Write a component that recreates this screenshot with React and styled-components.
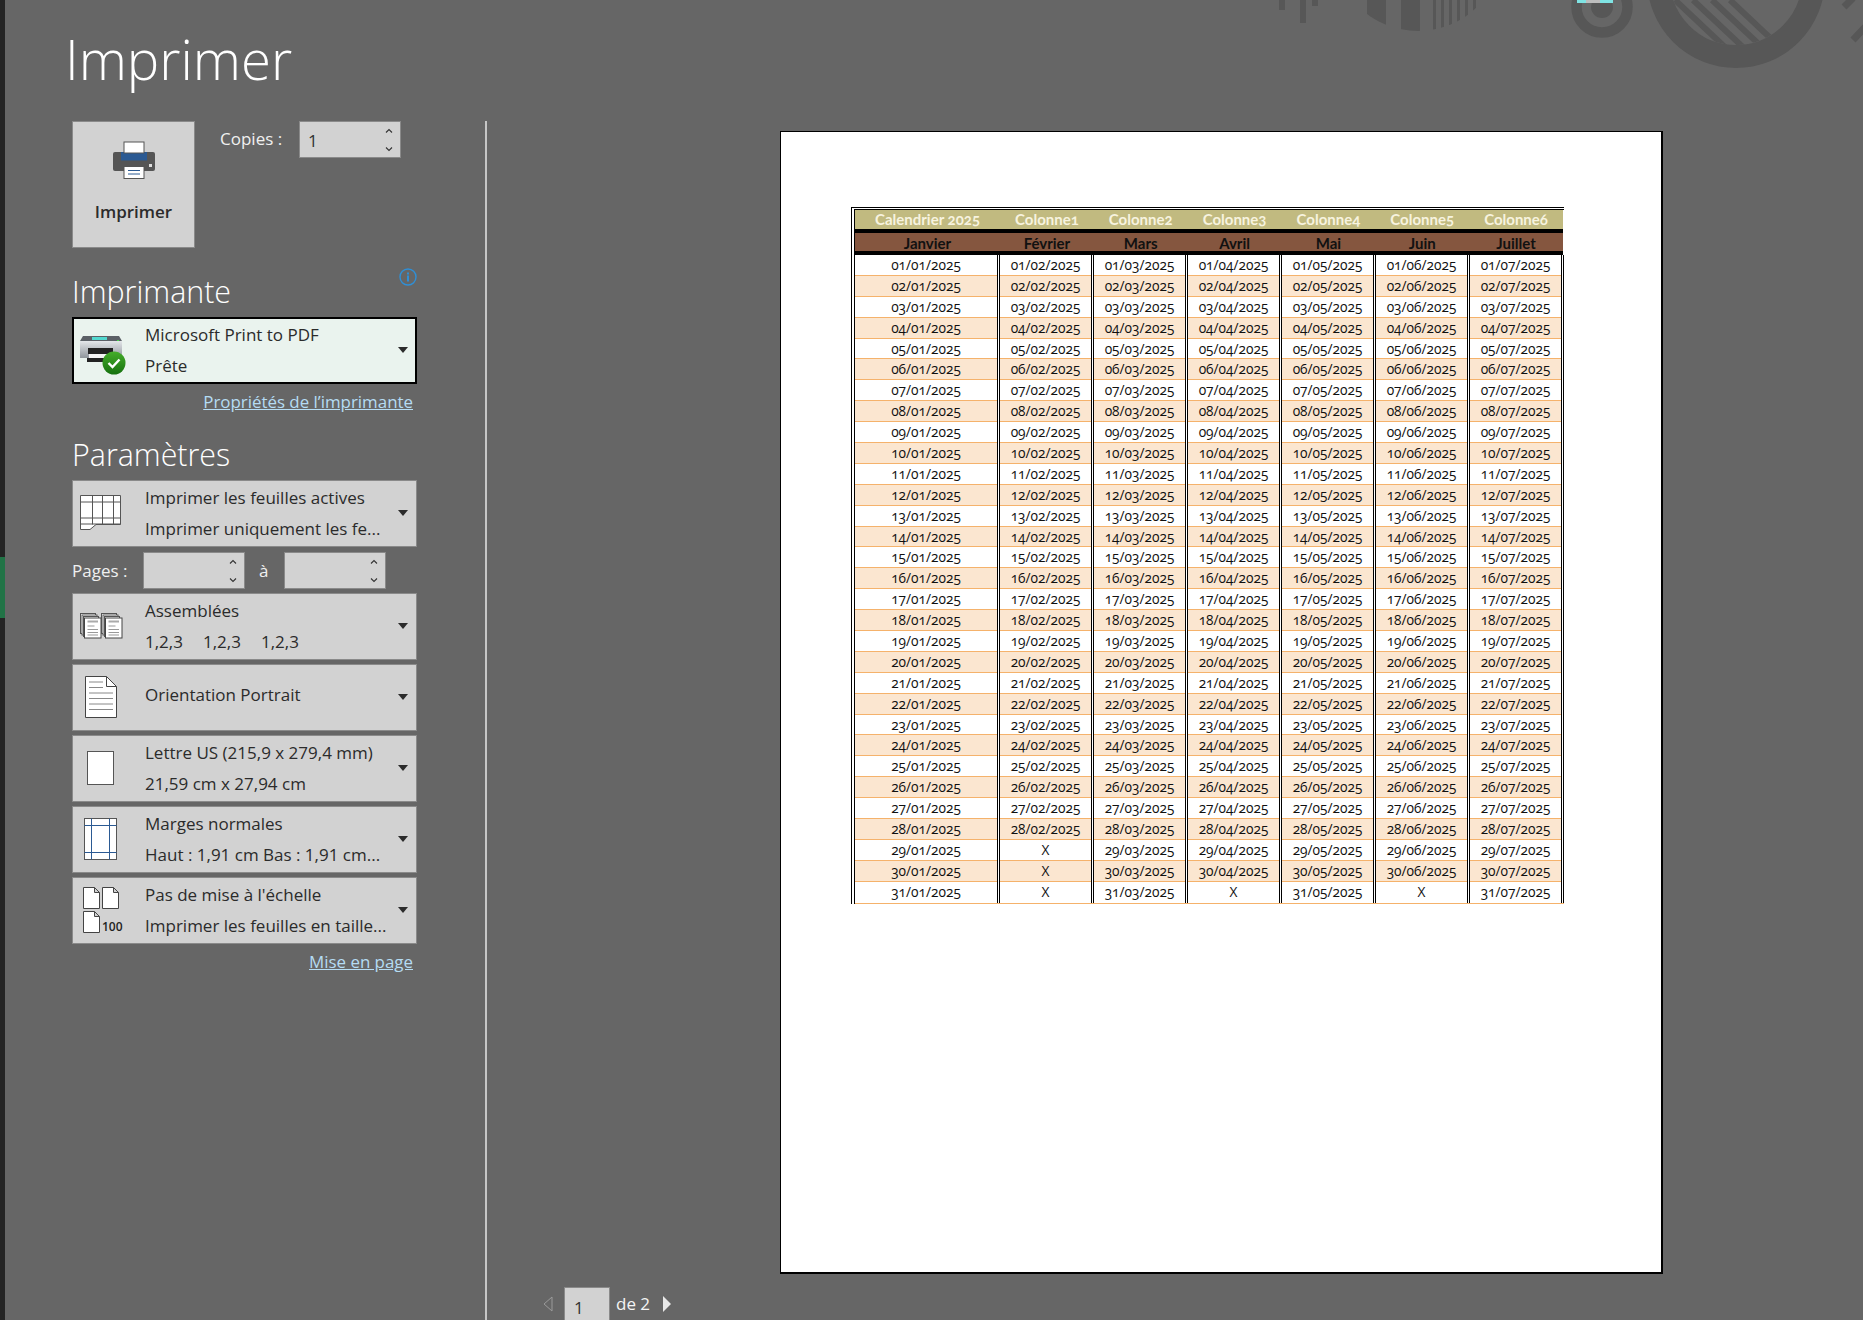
import styled, { createGlobalStyle } from "styled-components";

const GlobalStyle = createGlobalStyle`
  html, body {
    margin: 0;
    padding: 0;
    background: #666666;
  }
  * {
    box-sizing: border-box;
  }
`;

const Screen = styled.div`
  position: relative;
  display: flex;
  width: 1863px;
  height: 1320px;
  overflow: hidden;
  background: #666666;
  font-family: "Open Sans", "Noto Sans", sans-serif;
`;

const Rail = styled.div`
  flex: none;
  width: 5px;
  background: #242424;
  padding-top: 557px;
`;

const RailMark = styled.div`
  height: 61px;
  background: #217346;
`;

const Sidebar = styled.aside`
  flex: none;
  width: 480px;
  padding-left: 67px;
`;

const Title = styled.h1`
  height: 121px;
  margin: 0 0 0 -7px;
  padding-top: 17px;
  font-size: 54.5px;
  line-height: 84px;
  font-weight: 300;
  color: #ffffff;
`;

const TopRow = styled.div`
  display: flex;
  align-items: flex-start;
  height: 127px;
`;

const PrintButton = styled.button`
  display: flex;
  flex-direction: column;
  align-items: center;
  width: 123px;
  height: 127px;
  padding: 19px 0 0;
  background: #d2d2d2;
  border: 1px solid #8a8a8a;
  color: #2b2b2b;
  font-family: inherit;
  font-size: 17px;
  font-weight: 600;
  line-height: 22px;
`;

const PrintLabel = styled.span`
  margin-top: 22px;
`;

const FieldLabel = styled.span`
  color: #f0f0f0;
  font-size: 17px;
  line-height: 37px;
`;

const CopiesLabel = styled(FieldLabel)`
  width: 79px;
  margin-left: 25px;
  line-height: 36px;
`;

const Spinner = styled.div`
  display: flex;
  align-items: center;
  justify-content: space-between;
  width: 102px;
  height: 37px;
  padding: 2px 5px 0 8px;
  background: #d2d2d2;
  border: 1px solid #8a8a8a;
  color: #333333;
  font-size: 17px;
`;

const SpinnerArrows = styled.svg`
  flex: none;
  margin: -2px 0 0 auto;
  width: 12px;
  height: 28px;
`;

const SectionHead = styled.div`
  display: flex;
  justify-content: space-between;
  width: 345px;
  height: ${(p) => p.$height}px;
  padding-top: ${(p) => p.$top}px;
`;

const Heading = styled.h2`
  margin: 0;
  color: #ffffff;
  font-size: 30.4px;
  line-height: 38px;
  font-weight: 300;
`;

const InfoIcon = styled.svg`
  width: 18px;
  height: 18px;
  margin-top: -5px;
`;

const Select = styled.div`
  display: flex;
  align-items: center;
  width: 345px;
  height: 67px;
  padding-left: ${(p) => (p.$active ? 6 : 7)}px;
  background: ${(p) => (p.$active ? "#eaf3ee" : "#d2d2d2")};
  border: ${(p) => (p.$active ? "2px solid #000000" : "1px solid #8a8a8a")};
  color: #2b2b2b;
  font-size: 17px;
  line-height: 31px;
`;

const IconSlot = styled.svg`
  flex: none;
  width: 46px;
  height: 65px;
`;

const SelectText = styled.div`
  flex: 1;
  min-width: 0;
  margin-left: 19px;
  white-space: nowrap;
  padding-bottom: ${(p) => (p.$single ? 7 : 2)}px;
`;

const Collate = styled.span`
  display: inline-block;
  width: 58px;
`;

const Caret = styled.span`
  flex: none;
  width: 0;
  height: 0;
  margin: -2px ${(p) => (p.$active ? 7 : 8)}px 0 0;
  border-left: 5.5px solid transparent;
  border-right: 5.5px solid transparent;
  border-top: 6px solid #2b2b2b;
`;

const LinkRow = styled.div`
  width: 341px;
  height: ${(p) => p.$height}px;
  text-align: right;
  line-height: 36px;
`;

const SideLink = styled.a`
  color: #b5dcf3;
  font-size: 16.9px;
  text-decoration: underline;
`;

const SelectStack = styled.div`
  display: flex;
  flex-direction: column;
  gap: 4px;
`;

const PagesRow = styled.div`
  display: flex;
  align-items: center;
  height: 37px;
  margin-top: 1px;
`;

const PagesLabel = styled(FieldLabel)`
  width: 71px;
  margin-left: 0;
`;

const ToLabel = styled(FieldLabel)`
  width: 39px;
  padding-left: 14px;
`;

const Divider = styled.div`
  flex: none;
  width: 2px;
  margin-top: 121px;
  background: #c6c6c6;
`;

const Preview = styled.main`
  flex: 1;
  padding: 131px 0 0 293px;
  position: relative;
`;

const Sheet = styled.div`
  width: 883px;
  height: 1143px;
  padding: 75px 0 0 70px;
  background: #ffffff;
  border-style: solid;
  border-color: #000000;
  border-width: 1px 2px 2px 1px;
`;

const SheetTable = styled.div`
  width: 713px;
  border-top: 3px double #000000;
  border-left: 4px double #000000;
  font-family: "Open Sans", "Lato", sans-serif;
  font-variant-numeric: oldstyle-nums;
  font-feature-settings: "onum" 1;
  color: #101010;
`;

const BandRow = styled.div`
  display: grid;
  grid-template-columns: 145px repeat(6, 1fr);
  height: ${(p) => p.$height}px;
  margin-right: 1px;
  background: ${(p) => p.$bg};
  border-bottom: 4px solid #000000;
  color: ${(p) => p.$color};
  font-family: "Lato", sans-serif;
  font-size: 15px;
  font-weight: 700;
  line-height: ${(p) => p.$lead}px;
  text-align: center;
`;

const Body = styled.div`
  display: flex;
  border-bottom: 1px solid #f5b26b;
`;

const Column = styled.div`
  flex: ${(p) => (p.$wide ? "none" : 1)};
  width: ${(p) => (p.$wide ? "145px" : "auto")};
  min-width: 0;
  border-right: 3px double #000000;
`;

const DayCell = styled.div`
  height: 20.9px;
  background: ${(p) => (p.$even ? "#fbe6d0" : "#ffffff")};
  border-bottom: ${(p) => (p.$last ? "none" : "1px solid #f5b26b")};
  font-size: 13.7px;
  line-height: 19px;
  text-align: center;
  white-space: nowrap;
`;

const Pager = styled.div`
  display: flex;
  align-items: flex-start;
  margin: 13px 0 0 -237px;
  color: #f4f4f4;
  font-size: 17px;
`;

const PageArrow = styled.svg`
  flex: none;
  width: 10px;
  height: 16px;
  margin-top: 9px;
`;

const PageBox = styled.div`
  width: 46px;
  height: 36px;
  margin-left: 11px;
  padding: 8px 0 0 9px;
  background: #d2d2d2;
  border: 1px solid #8a8a8a;
  color: #333333;
`;

const PageCount = styled.span`
  width: 46px;
  margin-left: 6px;
  line-height: 34px;
`;

const BackdropArt = styled.svg`
  position: absolute;
  top: 0;
  left: 1240px;
  width: 623px;
  height: 80px;
  pointer-events: none;
`;

const months = ["01", "02", "03", "04", "05", "06", "07"];
const monthNames = ["Janvier", "Février", "Mars", "Avril", "Mai", "Juin", "Juillet"];
const titles = ["Calendrier 2025", "Colonne1", "Colonne2", "Colonne3", "Colonne4", "Colonne5", "Colonne6"];
const monthDays = { "02": 28, "04": 30, "06": 30 };
const days = Array.from({ length: 31 }, (_, i) => i + 1);

const Arrows = () => (
  <SpinnerArrows viewBox="0 0 12 28" fill="none" stroke="#333" strokeWidth="1.1">
    <path d="M3 6.5 6 3.5 9 6.5" />
    <path d="M3 21.5 6 24.5 9 21.5" />
  </SpinnerArrows>
);

const PrintIcon = () => (
  <svg width="44" height="38" viewBox="0 0 44 38">
    <rect x="1" y="11" width="42" height="19" rx="2" fill="#555" />
    <path d="M9 11h26v8.5H9z" fill="#2b5a93" />
    <rect x="12" y="1" width="20" height="11" fill="#fff" stroke="#555" />
    <rect x="12" y="25.5" width="20" height="12" fill="#fff" stroke="#555" />
    <path d="M16 29.5h12M16 33h12" stroke="#2b5a93" />
    <rect x="37" y="23" width="3" height="3" fill="#ddd" />
  </svg>
);

const ReadyPrinter = () => (
  <IconSlot viewBox="0 0 46 65">
    <defs>
      <linearGradient id="readyBody" x1="0" y1="0" x2="0" y2="1">
        <stop offset="0" stopColor="#e4e7ea" />
        <stop offset="1" stopColor="#8f959b" />
      </linearGradient>
      <linearGradient id="readyCheck" x1="0" y1="0" x2="0" y2="1">
        <stop offset="0" stopColor="#45ad2a" />
        <stop offset="1" stopColor="#16710f" />
      </linearGradient>
    </defs>
    <path d="M0 40V23h42v17z" fill="url(#readyBody)" />
    <path d="M3 18h36l3 5H0z" fill="#5b6066" />
    <rect x="12" y="19" width="15" height="3" fill="#52d8cf" />
    <rect x="37" y="22" width="2" height="1" fill="#45d04a" />
    <rect x="8" y="30" width="25" height="6" fill="#222" />
    <rect x="9" y="36" width="20" height="4" fill="#f4f4f4" />
    <rect x="7" y="40" width="17" height="4" fill="#222" />
    <circle cx="34" cy="45" r="11.5" fill="url(#readyCheck)" />
    <path d="M28.5 45l4 4 7-7.5" fill="none" stroke="#fff" strokeWidth="2.4" />
  </IconSlot>
);

const SheetsIcon = () => (
  <IconSlot viewBox="0 0 46 65" fill="#fff" stroke="#555">
    <path d="M.5 14.5h40v29H16l-6 5H.5z" />
    <path d="M.5 21h40M.5 37h40M.5 43h40M12.5 14.5V43.5M22.5 14.5V43.5M33.5 14.5V43.5" fill="none" />
  </IconSlot>
);

const Stack = ({ x }) => (
  <g>
    <rect x={x} y="19.5" width="15" height="20" stroke="#555" />
    <rect x={x + 1.5} y="21" width="15" height="20" stroke="#555" />
    <rect x={x + 3} y="22.5" width="15" height="20" stroke="#555" />
    <rect x={x + 4} y="24" width="16.5" height="20" stroke="#444" />
    <rect x={x + 7} y="26.5" width="10.5" height="2" fill="#aaa" stroke="none" />
    <path d={`M${x + 7} 32h7M${x + 7} 35.5h10.5M${x + 7} 38.5h10.5M${x + 7} 41h10.5`} stroke="#999" fill="none" />
  </g>
);

const CollateIcon = () => (
  <IconSlot viewBox="0 0 46 65" fill="#fff">
    <Stack x={0.5} />
    <Stack x={21.5} />
  </IconSlot>
);

const PortraitIcon = () => (
  <IconSlot viewBox="0 0 46 65" fill="#fff" stroke="#444">
    <path d="M5.5 11.5h21l10 10v31h-31z" />
    <path d="M26.5 11.5v10h10" fill="none" />
    <path d="M9 17h14M9 22.5h14M9 28h24M9 33.5h24M9 39h24M9 44.5h24" fill="none" stroke="#888" />
  </IconSlot>
);

const LetterIcon = () => (
  <IconSlot viewBox="0 0 46 65">
    <rect x="7.5" y="15.5" width="26" height="33" fill="#fff" stroke="#555" />
  </IconSlot>
);

const MarginsIcon = () => (
  <IconSlot viewBox="0 0 46 65">
    <rect x="4.5" y="11.5" width="32" height="41" fill="#fff" stroke="#555" />
    <path d="M11.5 11.5v41M29.5 11.5v41M4.5 18.5h32M4.5 45.5h32" fill="none" stroke="#2b5a93" />
  </IconSlot>
);

const SmallPage = ({ x, y }) => (
  <path
    d={`M${x} ${y}h11l5 5v16h-16zM${x + 11} ${y}v5h5`}
    fill="#fff"
    stroke="#444"
  />
);

const ScaleIcon = () => (
  <IconSlot viewBox="0 0 46 65">
    <SmallPage x={3.5} y={9.5} />
    <SmallPage x={22.5} y={9.5} />
    <SmallPage x={3.5} y={33.5} />
    <text x="22" y="53" fontFamily="Open Sans, sans-serif" fontSize="12" fontWeight="600" fill="#222">
      100
    </text>
  </IconSlot>
);

const Backdrop = () => (
  <BackdropArt viewBox="1240 0 623 80" fill="#575757">
    <defs>
      <clipPath id="drumClip">
        <circle cx="1418" cy="-54" r="85" />
      </clipPath>
      <clipPath id="hatchClip">
        <circle cx="1736" cy="-21" r="66" />
      </clipPath>
    </defs>
    <rect x="1279" y="0" width="6" height="10" />
    <rect x="1300" y="0" width="6" height="23" />
    <rect x="1312" y="0" width="6" height="6" />
    <g clipPath="url(#drumClip)">
      <rect x="1367" y="0" width="19" height="40" />
      <rect x="1401" y="0" width="19" height="40" />
      <rect x="1433" y="0" width="3" height="40" />
      <rect x="1441" y="0" width="3" height="40" />
      <rect x="1449" y="0" width="3" height="40" />
      <rect x="1457" y="0" width="3" height="40" />
      <rect x="1465" y="0" width="3" height="40" />
      <rect x="1473" y="0" width="3" height="40" />
    </g>
    <circle cx="1602" cy="7" r="25.5" fill="none" stroke="#575757" strokeWidth="10.5" />
    <circle cx="1602" cy="7" r="11" />
    <rect x="1577" y="0" width="36" height="3" fill="#7fe3e3" />
    <rect x="1586" y="0" width="14" height="3" fill="#bdbdbd" />
    <circle cx="1736" cy="-21" r="77.5" fill="none" stroke="#575757" strokeWidth="23" />
    <g clipPath="url(#hatchClip)" stroke="#575757" strokeWidth="6" fill="none">
      <path d="M1675 0 1745 66M1693 0 1763 66M1712 0 1782 66M1730 0 1800 66" />
    </g>
    <path d="M1844 7 1853 -2M1853 40 1870 22" stroke="#575757" strokeWidth="7" fill="none" />
  </BackdropArt>
);

export default function App() {
  return (
    <Screen>
      <GlobalStyle />
      <Rail>
        <RailMark />
      </Rail>
      <Sidebar>
        <Title>Imprimer</Title>
        <TopRow>
          <PrintButton>
            <PrintIcon />
            <PrintLabel>Imprimer</PrintLabel>
          </PrintButton>
          <CopiesLabel>Copies :</CopiesLabel>
          <Spinner>
            1
            <Arrows />
          </Spinner>
        </TopRow>
        <SectionHead $height={69} $top={25}>
          <Heading>Imprimante</Heading>
          <InfoIcon viewBox="0 0 18 18">
            <circle cx="9" cy="9" r="8" fill="none" stroke="#2f8fd6" strokeWidth="1.4" />
            <rect x="8" y="7.5" width="2" height="6" fill="#2f8fd6" />
            <rect x="8" y="4.5" width="2" height="2" fill="#2f8fd6" />
          </InfoIcon>
        </SectionHead>
        <Select $active>
          <ReadyPrinter />
          <SelectText>
            Microsoft Print to PDF
            <br />
            Prête
          </SelectText>
          <Caret $active />
        </Select>
        <LinkRow $height={36}>
          <SideLink>Propriétés de l’imprimante</SideLink>
        </LinkRow>
        <SectionHead $height={60} $top={16}>
          <Heading>Paramètres</Heading>
        </SectionHead>
        <SelectStack>
          <Select>
            <SheetsIcon />
            <SelectText>
              Imprimer les feuilles actives
              <br />
              Imprimer uniquement les fe...
            </SelectText>
            <Caret />
          </Select>
          <PagesRow>
            <PagesLabel>Pages :</PagesLabel>
            <Spinner>
              <Arrows />
            </Spinner>
            <ToLabel>à</ToLabel>
            <Spinner>
              <Arrows />
            </Spinner>
          </PagesRow>
          <Select>
            <CollateIcon />
            <SelectText>
              Assemblées
              <br />
              <Collate>1,2,3</Collate>
              <Collate>1,2,3</Collate>
              <Collate>1,2,3</Collate>
            </SelectText>
            <Caret />
          </Select>
          <Select>
            <PortraitIcon />
            <SelectText $single>Orientation Portrait</SelectText>
            <Caret />
          </Select>
          <Select>
            <LetterIcon />
            <SelectText>
              Lettre US (215,9 x 279,4 mm)
              <br />
              21,59 cm x 27,94 cm
            </SelectText>
            <Caret />
          </Select>
          <Select>
            <MarginsIcon />
            <SelectText>
              Marges normales
              <br />
              Haut : 1,91 cm Bas : 1,91 cm...
            </SelectText>
            <Caret />
          </Select>
          <Select>
            <ScaleIcon />
            <SelectText>
              Pas de mise à l'échelle
              <br />
              Imprimer les feuilles en taille...
            </SelectText>
            <Caret />
          </Select>
        </SelectStack>
        <LinkRow $height={36}>
          <SideLink>Mise en page</SideLink>
        </LinkRow>
      </Sidebar>
      <Divider />
      <Preview>
        <Sheet>
          <SheetTable>
            <BandRow $height={23} $lead={18} $bg="#c1ba80" $color="#f7f3df">
              {titles.map((t) => (
                <span key={t}>{t}</span>
              ))}
            </BandRow>
            <BandRow $height={22} $lead={21} $bg="#85563f" $color="#111111">
              {monthNames.map((m) => (
                <span key={m}>{m}</span>
              ))}
            </BandRow>
            <Body>
              {months.map((m, col) => (
                <Column key={m} $wide={col === 0}>
                  {days.map((d, row) => (
                    <DayCell key={d} $even={row % 2 === 1} $last={row === 30}>
                      {d > (monthDays[m] || 31) ? "X" : `${String(d).padStart(2, "0")}/${m}/2025`}
                    </DayCell>
                  ))}
                </Column>
              ))}
            </Body>
          </SheetTable>
        </Sheet>
        <Pager>
          <PageArrow viewBox="0 0 10 16">
            <path d="M9 1v14L1 8z" fill="none" stroke="#9a9a9a" />
          </PageArrow>
          <PageBox>1</PageBox>
          <PageCount>de 2</PageCount>
          <PageArrow viewBox="0 0 10 16">
            <path d="M1 0v16l8-8z" fill="#e8e8e8" />
          </PageArrow>
        </Pager>
      </Preview>
      <Backdrop />
    </Screen>
  );
}
